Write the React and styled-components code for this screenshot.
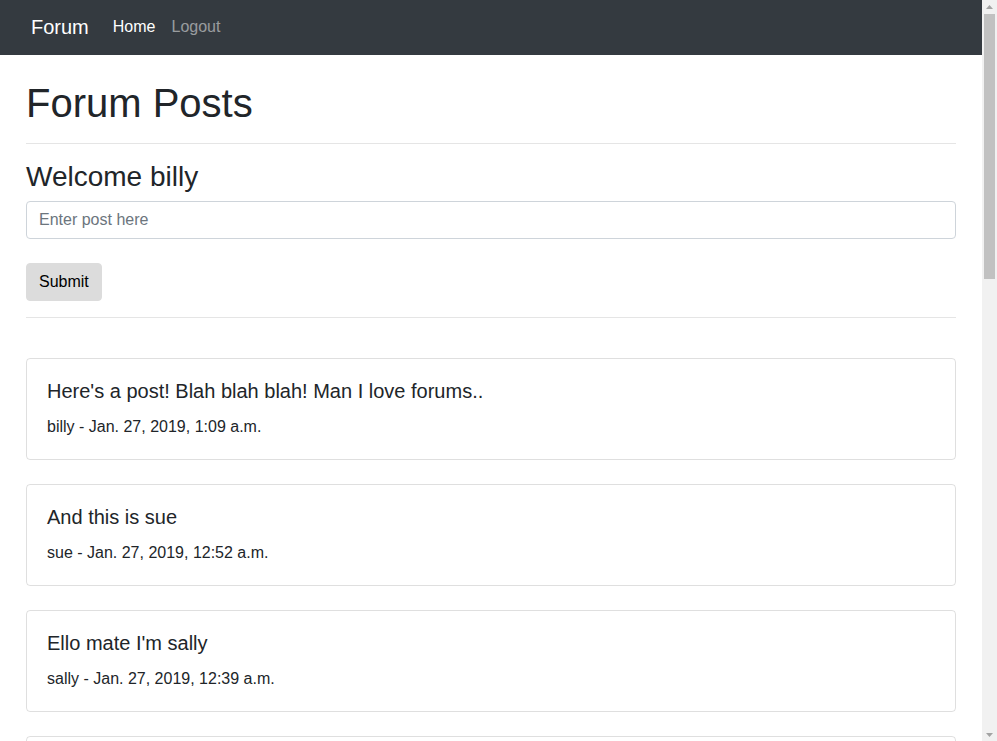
import React from "react";
import styled, { createGlobalStyle } from "styled-components";

const Global = createGlobalStyle`
  html, body { margin: 0; padding: 0; overflow: hidden; }
  body {
    font-family: "Liberation Sans", Arial, sans-serif;
    font-size: 16px;
    line-height: 1.5;
    color: #212529;
    background: #fff;
  }
  * { box-sizing: border-box; }
`;

const Shell = styled.div`
  display: flex;
  height: 100vh;
`;

const Page = styled.div`
  flex: 1;
  min-width: 0;
  overflow: hidden;
`;

const Rail = styled.div`
  width: 15px;
  flex: none;
  display: flex;
  flex-direction: column;
  background: #f1f1f1;
`;

const ArrowButton = styled.div`
  height: 14px;
  display: flex;
  align-items: center;
  justify-content: center;
  padding-top: ${(p) => (p.$down ? "1px" : "0")};
`;

const Track = styled.div`
  flex: 1;
  padding: 0 2px;
`;

const Thumb = styled.div`
  height: 265px;
  background: #c1c1c1;
`;

const Navbar = styled.nav`
  background: #343a40;
  padding: 7px 16px 8px;
`;

const NavInner = styled.div`
  display: flex;
  align-items: center;
  padding: 0 15px;
`;

const Brand = styled.a`
  font-size: 20px;
  line-height: 30px;
  padding: 5px 0;
  margin-right: 16px;
  color: #fff;
  text-decoration: none;
`;

const NavLink = styled.a`
  padding: 8px;
  font-size: 16px;
  line-height: 24px;
  text-decoration: none;
  color: ${(p) => (p.$active ? "#fff" : "rgba(255,255,255,0.5)")};
`;

const Main = styled.main`
  padding: 24px 26px 0;
`;

const Title = styled.h1`
  font-size: 40px;
  font-weight: 500;
  line-height: 1.2;
  margin: 0 0 8px;
`;

const Rule = styled.hr`
  border: 0;
  border-top: 1px solid rgba(0, 0, 0, 0.1);
  margin: 16px 0;
`;

const Welcome = styled.h3`
  font-size: 28px;
  font-weight: 500;
  line-height: 1.2;
  margin: 0 0 7px;
`;

const Form = styled.form`
  display: flex;
  flex-direction: column;
  align-items: flex-start;
  gap: 24px;
`;

const Input = styled.input`
  width: 100%;
  height: 38px;
  padding: 6px 12px;
  font-family: inherit;
  font-size: 16px;
  line-height: 1.5;
  color: #495057;
  border: 1px solid #ced4da;
  border-radius: 4px;
  background: #fff;
  &::placeholder { color: #6c757d; }
`;

const Button = styled.button`
  height: 38px;
  padding: 6px 12px;
  font-family: inherit;
  font-size: 16px;
  line-height: 1.5;
  color: #000;
  background: #dcdcdc;
  border: 1px solid #dcdcdc;
  border-radius: 4px;
`;

const PostList = styled.div`
  display: flex;
  flex-direction: column;
  gap: 24px;
  padding: 24px 0 24px;
`;

const Card = styled.div`
  border: 1px solid rgba(0, 0, 0, 0.125);
  border-radius: 4px;
  padding: 20px;
`;

const PostTitle = styled.h5`
  font-size: 20px;
  font-weight: 500;
  line-height: 1.2;
  margin: 0 0 12px;
`;

const Meta = styled.p`
  margin: 0;
  font-size: 16px;
  line-height: 24px;
`;

const posts = [
  ["Here's a post! Blah blah blah! Man I love forums..", "billy - Jan. 27, 2019, 1:09 a.m."],
  ["And this is sue", "sue - Jan. 27, 2019, 12:52 a.m."],
  ["Ello mate I'm sally", "sally - Jan. 27, 2019, 12:39 a.m."],
  ["Hey everyone, bob here", "bob - Jan. 27, 2019, 12:31 a.m."],
  ["Anyone else up this late?", "jim - Jan. 27, 2019, 12:20 a.m."],
  ["First time posting here", "kate - Jan. 27, 2019, 12:11 a.m."],
];

const Triangle = ({ down }) => (
  <svg width="7" height="4" viewBox="0 0 7 4">
    <polygon points={down ? "0,0 7,0 3.5,4" : "3.5,0 7,4 0,4"} fill="#a3a3a3" />
  </svg>
);

export default function App() {
  return (
    <>
      <Global />
      <Shell>
        <Page>
          <Navbar>
            <NavInner>
              <Brand href="#">Forum</Brand>
              <NavLink href="#" $active>Home</NavLink>
              <NavLink href="#">Logout</NavLink>
            </NavInner>
          </Navbar>
          <Main>
            <Title>Forum Posts</Title>
            <Rule />
            <Welcome>Welcome billy</Welcome>
            <Form onSubmit={(e) => e.preventDefault()}>
              <Input type="text" placeholder="Enter post here" />
              <Button type="submit">Submit</Button>
            </Form>
            <Rule />
            <PostList>
              {posts.map(([t, m], i) => (
                <Card key={i}>
                  <PostTitle>{t}</PostTitle>
                  <Meta>{m}</Meta>
                </Card>
              ))}
            </PostList>
          </Main>
        </Page>
        <Rail>
          <ArrowButton><Triangle /></ArrowButton>
          <Track><Thumb /></Track>
          <ArrowButton $down><Triangle down /></ArrowButton>
        </Rail>
      </Shell>
    </>
  );
}
